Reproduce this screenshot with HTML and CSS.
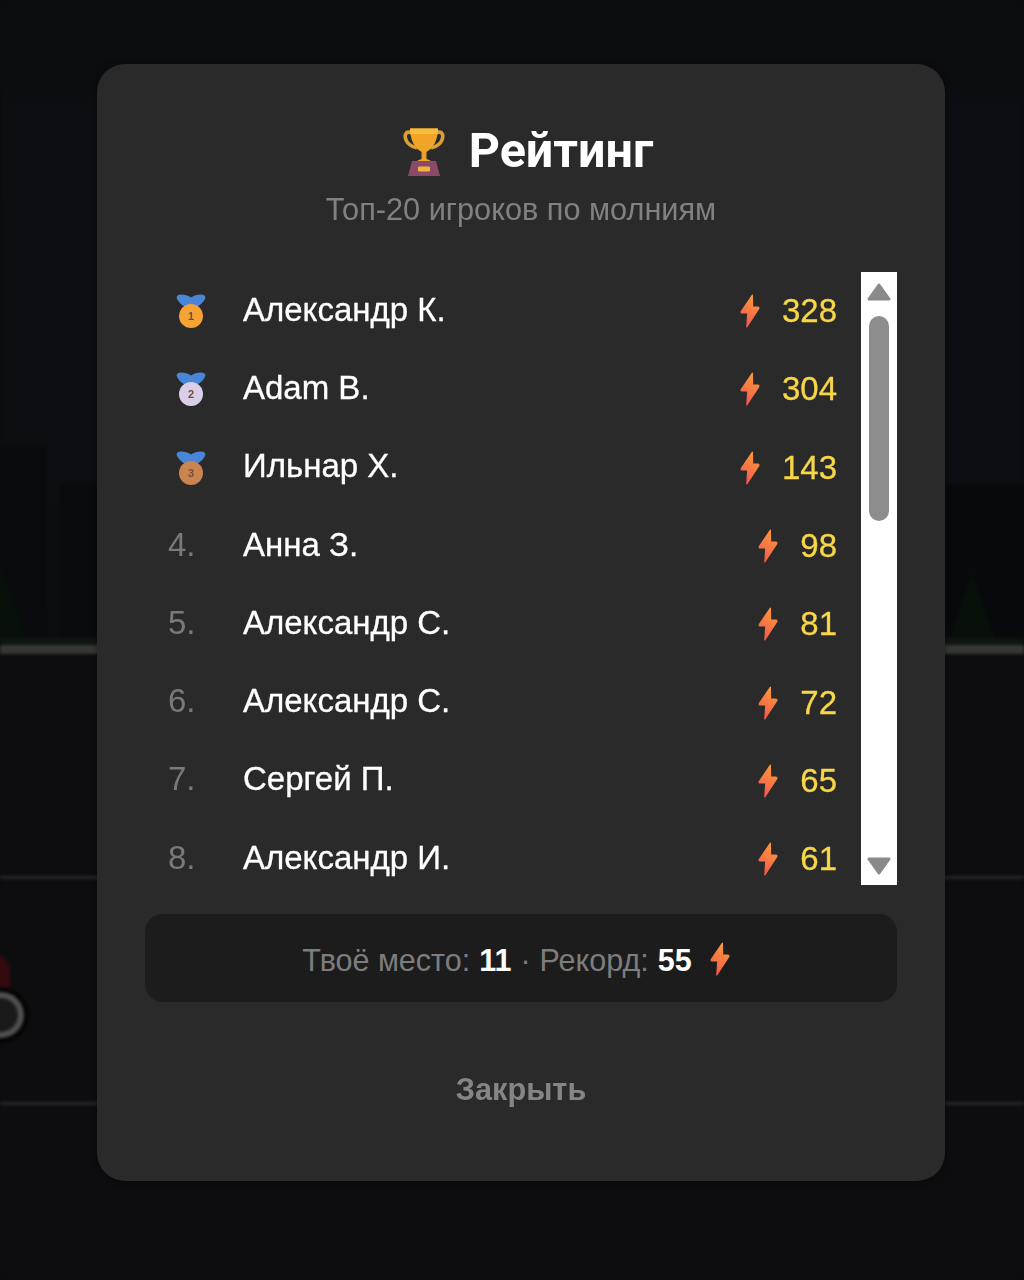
FILE: index.html
```html
<!DOCTYPE html>
<html lang="ru">
<head>
    <meta charset="UTF-8">
    <meta name="viewport" content="width=device-width, initial-scale=1.0">
    <title>Рейтинг</title>
    <link rel="stylesheet" href="styles.css">
</head>
<body>

    <!-- Dimmed game scene behind the modal -->
    <div class="scene">
        <div class="building b1"></div>
        <div class="building b2"></div>
        <div class="building b3"></div>
        <div class="tree t1"></div>
        <div class="tree t2"></div>
        <div class="grass"></div>
        <div class="road-edge"></div>
        <div class="lane l1"></div>
        <div class="lane l2"></div>
        <div class="bike"></div>
        <div class="wheel"></div>
    </div>

    <svg class="defs" width="0" height="0">
        <defs>
            <linearGradient id="bolt-grad" x1="0.7" y1="0" x2="0.3" y2="1">
                <stop offset="0" stop-color="#fb9a3a"/>
                <stop offset="1" stop-color="#f4584e"/>
            </linearGradient>
            <symbol id="bolt" viewBox="0 0 20 34">
                <path d="M12.4 1 L1.2 17.6 Q0.8 19 2 19 L7.8 19 L6.8 33 L18.8 14.6 Q19.2 13 18 13 L12.6 13 Z" fill="url(#bolt-grad)" stroke="url(#bolt-grad)" stroke-width="1.2" stroke-linejoin="round"/>
            </symbol>
            <symbol id="ribbon" viewBox="0 0 30 14">
                <path d="M0.5 3.5 Q1 0.5 5 0.5 Q11 0.5 15 3.5 Q19 0.5 25 0.5 Q29 0.5 29.5 3.5 Q28 9 20 13.5 L10 13.5 Q2 9 0.5 3.5 Z" fill="#4a86d8"/>
            </symbol>
        </defs>
    </svg>

    <div class="modal">
        <div class="title-row">
            <svg class="trophy" width="42" height="48" viewBox="0 0 42 48">
                <path d="M9 5 C2 2 1 8 3.5 13 C6 18 11 19 14 20" fill="none" stroke="#dca032" stroke-width="3.6"/>
                <path d="M33 5 C40 2 41 8 38.500 13 C36 18 31 19 28 20" fill="none" stroke="#dca032" stroke-width="3.6"/>
                <path d="M7 0.5 H35 C35 12 30 22 21 25 C12 22 7 12 7 0.5 Z" fill="#f0a428"/>
                <path d="M7 0.5 H35 L34.5 6 H7.5 Z" fill="#f9bd3c"/>
                <rect x="18.5" y="24" width="5" height="8" fill="#e8a02c"/>
                <path d="M13 33.5 Q21 28 29 33.5 Z" fill="#f0a428"/>
                <path d="M9 33 H33 L37 48 H5 Z" fill="#8a4a68"/>
                <rect x="15" y="38.5" width="12" height="5" rx="1" fill="#f2b63c"/>
            </svg>
            <h1>Рейтинг</h1>
        </div>
        <p class="subtitle">Топ-20 игроков по молниям</p>

        <div class="list-wrap">
            <div class="list">
                <div class="row">
                    <span class="place">
                        <svg width="30" height="34" viewBox="0 0 30 34"><use href="#ribbon" width="30" height="14"/><circle cx="15" cy="22" r="12" fill="#f5a334"/><text x="15" y="26" class="medal-num">1</text></svg>
                    </span>
                    <span class="name">Александр К.</span>
                    <span class="score"><svg class="bolt"><use href="#bolt"/></svg><b>328</b></span>
                </div>
                <div class="row">
                    <span class="place">
                        <svg width="30" height="34" viewBox="0 0 30 34"><use href="#ribbon" width="30" height="14"/><circle cx="15" cy="22" r="12" fill="#d9cfe8"/><text x="15" y="26" class="medal-num">2</text></svg>
                    </span>
                    <span class="name">Adam B.</span>
                    <span class="score"><svg class="bolt"><use href="#bolt"/></svg><b>304</b></span>
                </div>
                <div class="row">
                    <span class="place">
                        <svg width="30" height="34" viewBox="0 0 30 34"><use href="#ribbon" width="30" height="14"/><circle cx="15" cy="22" r="12" fill="#c98450"/><text x="15" y="26" class="medal-num">3</text></svg>
                    </span>
                    <span class="name">Ильнар Х.</span>
                    <span class="score"><svg class="bolt"><use href="#bolt"/></svg><b>143</b></span>
                </div>
                <div class="row">
                    <span class="place num">4.</span>
                    <span class="name">Анна З.</span>
                    <span class="score"><svg class="bolt"><use href="#bolt"/></svg><b>98</b></span>
                </div>
                <div class="row">
                    <span class="place num">5.</span>
                    <span class="name">Александр С.</span>
                    <span class="score"><svg class="bolt"><use href="#bolt"/></svg><b>81</b></span>
                </div>
                <div class="row">
                    <span class="place num">6.</span>
                    <span class="name">Александр С.</span>
                    <span class="score"><svg class="bolt"><use href="#bolt"/></svg><b>72</b></span>
                </div>
                <div class="row">
                    <span class="place num">7.</span>
                    <span class="name">Сергей П.</span>
                    <span class="score"><svg class="bolt"><use href="#bolt"/></svg><b>65</b></span>
                </div>
                <div class="row">
                    <span class="place num">8.</span>
                    <span class="name">Александр И.</span>
                    <span class="score"><svg class="bolt"><use href="#bolt"/></svg><b>61</b></span>
                </div>
            </div>

            <div class="scrollbar">
                <svg class="arrow" width="24" height="18" viewBox="0 0 24 18"><path d="M12 2 L22 16 H2 Z" fill="#8a8a8a" stroke="#8a8a8a" stroke-width="3" stroke-linejoin="round"/></svg>
                <div class="thumb"></div>
                <svg class="arrow arrow-down" width="24" height="18" viewBox="0 0 24 18"><path d="M2 2 H22 L12 16 Z" fill="#8a8a8a" stroke="#8a8a8a" stroke-width="3" stroke-linejoin="round"/></svg>
            </div>
        </div>

        <div class="my-place">
            <span>Твоё место:</span> <strong>11</strong>
            <span class="dot">·</span>
            <span>Рекорд:</span> <strong>55</strong>
            <svg class="bolt"><use href="#bolt"/></svg>
        </div>

        <button class="close-btn">Закрыть</button>
    </div>

</body>
</html>
```

FILE: styles.css
```css
html, body { margin: 0; padding: 0; }
body {
    width: 1024px;
    height: 1280px;
    overflow: hidden;
    position: relative;
    background-color: #0d0d10;
    font-family: "Liberation Sans", Arial, sans-serif;
}

/* background scene, all of it sits under the modal */
.scene { position: absolute; inset: 0; filter: blur(1.5px); background: linear-gradient(#0b0d11 0, #0b0e12 420px, #0b0d12 640px, #0d0d0f 655px, #0d0d0f 1280px); }
.building { position: absolute; background-color: #090b0e; }
.b1 { left: 0; top: 446px; width: 47px; height: 195px; }
.b2 { left: 60px; top: 483px; width: 40px; height: 158px; }
.b3 { left: 946px; top: 485px; width: 78px; height: 155px; background-color: #08090d; }
.tree { position: absolute; width: 0; height: 0; border-left: 24px solid transparent; border-right: 24px solid transparent; border-bottom: 72px solid #08100a; }
.t1 { left: -22px; top: 566px; }
.t2 { left: 950px; top: 572px; border-left-width: 22px; border-right-width: 22px; border-bottom-width: 66px; }
.grass { position: absolute; left: 0; right: 0; top: 638px; height: 7px; background-color: #10150f; }
.road-edge { position: absolute; left: 0; right: 0; top: 645px; height: 9px; background-color: #363734; }
.lane { position: absolute; left: 0; right: 0; height: 3px; background-color: #262628; }
.l1 { top: 876px; }
.l2 { top: 1102px; }
.bike { position: absolute; left: -14px; top: 952px; width: 24px; height: 50px; border-radius: 0 20px 6px 0; background-color: #330a0e; }
.wheel { position: absolute; left: -22px; top: 992px; width: 46px; height: 46px; box-sizing: border-box; border-radius: 50%; border: 6px solid #505050; outline: 5px solid #050505; background-color: #1a1a1a; }

.defs { position: absolute; }

.modal {
    position: absolute; /* floats over the scene */
    left: 97px;
    top: 64px;
    width: 848px;
    height: 1117px;
    box-sizing: border-box;
    padding: 57px 48px 0 48px;
    background-color: #2a2a2a;
    border-radius: 28px;
    box-shadow: 0 0 6px rgba(0, 0, 0, 0.4);
    display: flex;
    flex-direction: column;
    align-items: center;
    filter: blur(0.4px);
}

.title-row { display: flex; align-items: center; justify-content: center; gap: 24px; height: 60px; padding-left: 14px; }
.title-row h1 { margin: 0; color: #fff; font-family: Roboto, "Liberation Sans", sans-serif; font-size: 48.5px; font-weight: 700; line-height: 60px; }
.trophy { display: block; margin-top: 2px; }
.subtitle { margin: 10px 0 0 0; color: #818181; font-size: 30.7px; line-height: 38px; }

.list-wrap { display: flex; width: 100%; height: 613px; margin-top: 43px; }
.list { flex: 1; height: 613px; overflow: hidden; padding: 0 24px 0 20px; box-sizing: border-box; }
.scrollbar { width: 36px; height: 613px; background-color: #fff; display: flex; flex-direction: column; align-items: center; box-sizing: border-box; padding-top: 11px; }
.arrow { display: block; flex-shrink: 0; }
.arrow-down { margin-top: 336px; }
.thumb { width: 20px; height: 205px; margin-top: 15px; background-color: #8d8d8d; border-radius: 10px; }

.row { display: flex; align-items: center; height: 78.3px; }
.place { width: 78px; flex-shrink: 0; display: flex; align-items: center; padding-left: 11px; box-sizing: border-box; }
.place.num { padding-left: 3px; margin-bottom: 3px; color: #7a7a7a; font-size: 33px; }
.medal-num { font-family: "Liberation Sans", sans-serif; font-size: 11px; font-weight: 700; text-anchor: middle; fill: #7a4a3c; }
.name { flex: 1; color: #fff; font-size: 33px; margin-bottom: 3px; -webkit-text-stroke: 0.3px #fff; }
.score { display: flex; align-items: center; gap: 22px; }
.score b { color: #f7d648; font-size: 33px; font-weight: 400; -webkit-text-stroke: 0.3px #f7d648; }
.bolt { width: 20px; height: 34px; display: block; flex-shrink: 0; }

.my-place {
    width: 100%;
    height: 88px;
    margin-top: 29px;
    padding: 4px 10px 0 0;
    box-sizing: border-box;
    background-color: #1c1c1c;
    border-radius: 18px;
    display: flex;
    align-items: center;
    justify-content: center;
    gap: 9px;
    color: #7d7d7d;
    font-size: 30.5px;
}
.my-place strong { color: #fff; font-weight: 700; }
.my-place .bolt { margin: -2px 0 0 9px; }

.close-btn {
    margin-top: 66px;
    border: none;
    background: none;
    padding: 0;
    color: #858585;
    font-family: "Liberation Sans", Arial, sans-serif;
    font-size: 30.7px;
    font-weight: 700;
    line-height: 44px;
    cursor: pointer;
}
```
